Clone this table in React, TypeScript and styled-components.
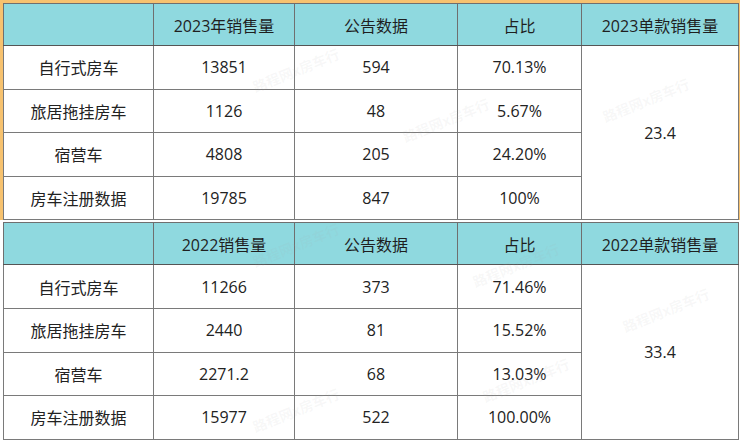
import React from "react";
import styled, { createGlobalStyle } from "styled-components";

const Global = createGlobalStyle`
  html, body { margin: 0; padding: 0; background: #ffffff; }
  body { font-family: "Open Sans", "Noto Sans CJK SC", sans-serif; color: #222; }
`;

const Page = styled.div`
  width: 740px;
  height: 444px;
  position: relative;
  overflow: hidden;
  display: flex;
  flex-direction: column;
  gap: 2px;
  background: #ffffff;
`;

const Frame = styled.div<{ $orange?: boolean }>`
  background: ${(p) => (p.$orange ? "#f7c26f" : "#ffffff")};
  padding: ${(p) => (p.$orange ? "3px 2px 0 3px" : "0 2px 0 3px")};
`;

const Table = styled.table`
  width: 735px;
  border-collapse: collapse;
  table-layout: fixed;
  border: 1.5px solid #2e2e2e;
  background: #ffffff;
`;

const HeadCell = styled.th`
  background: #8fd9df;
  height: 41px;
  font-weight: 400;
  font-size: 16px;
  padding: 0;
  text-align: center;
  border: 1px solid #6f6f6f;
  border-bottom: 1.5px solid #555;
  color: #1f1f1f;
`;

const Cell = styled.td`
  height: 42.6px;
  font-size: 16px;
  padding: 0;
  text-align: center;
  border: 1px solid #7a7a7a;
  color: #222;
`;

const Watermark = styled.div<{ $x: number; $y: number }>`
  position: absolute;
  left: ${(p) => p.$x}px;
  top: ${(p) => p.$y}px;
  transform: rotate(-22deg);
  font-family: "Noto Sans CJK SC", sans-serif;
  font-size: 14px;
  font-weight: 700;
  color: rgba(170, 170, 170, 0.09);
  white-space: nowrap;
  pointer-events: none;
`;

type Row = [string, string, string, string];

const top: Row[] = [
  ["自行式房车", "13851", "594", "70.13%"],
  ["旅居拖挂房车", "1126", "48", "5.67%"],
  ["宿营车", "4808", "205", "24.20%"],
  ["房车注册数据", "19785", "847", "100%"],
];

const bottom: Row[] = [
  ["自行式房车", "11266", "373", "71.46%"],
  ["旅居拖挂房车", "2440", "81", "15.52%"],
  ["宿营车", "2271.2", "68", "13.03%"],
  ["房车注册数据", "15977", "522", "100.00%"],
];

function DataTable({
  salesLabel,
  unitLabel,
  unitValue,
  rows,
}: {
  salesLabel: string;
  unitLabel: string;
  unitValue: string;
  rows: Row[];
}) {
  return (
    <Table>
      <colgroup>
        <col style={{ width: 150 }} />
        <col style={{ width: 141 }} />
        <col style={{ width: 163 }} />
        <col style={{ width: 124 }} />
        <col style={{ width: 157 }} />
      </colgroup>
      <thead>
        <tr>
          <HeadCell />
          <HeadCell>{salesLabel}</HeadCell>
          <HeadCell>公告数据</HeadCell>
          <HeadCell>占比</HeadCell>
          <HeadCell>{unitLabel}</HeadCell>
        </tr>
      </thead>
      <tbody>
        {rows.map((r, i) => (
          <tr key={i}>
            <Cell>{r[0]}</Cell>
            <Cell>{r[1]}</Cell>
            <Cell>{r[2]}</Cell>
            <Cell>{r[3]}</Cell>
            {i === 0 && <Cell rowSpan={4}>{unitValue}</Cell>}
          </tr>
        ))}
      </tbody>
    </Table>
  );
}

export default function App() {
  const marks = [
    [250, 60],
    [400, 110],
    [600, 90],
    [250, 235],
    [470, 255],
    [620, 300],
    [250, 400],
    [480, 370],
  ];
  return (
    <>
      <Global />
      <Page>
        <Frame $orange>
          <DataTable
            salesLabel="2023年销售量"
            unitLabel="2023单款销售量"
            unitValue="23.4"
            rows={top}
          />
        </Frame>
        <Frame>
          <DataTable
            salesLabel="2022销售量"
            unitLabel="2022单款销售量"
            unitValue="33.4"
            rows={bottom}
          />
        </Frame>
        {marks.map(([x, y], i) => (
          <Watermark key={i} $x={x} $y={y}>
            路程网x房车行
          </Watermark>
        ))}
      </Page>
    </>
  );
}
